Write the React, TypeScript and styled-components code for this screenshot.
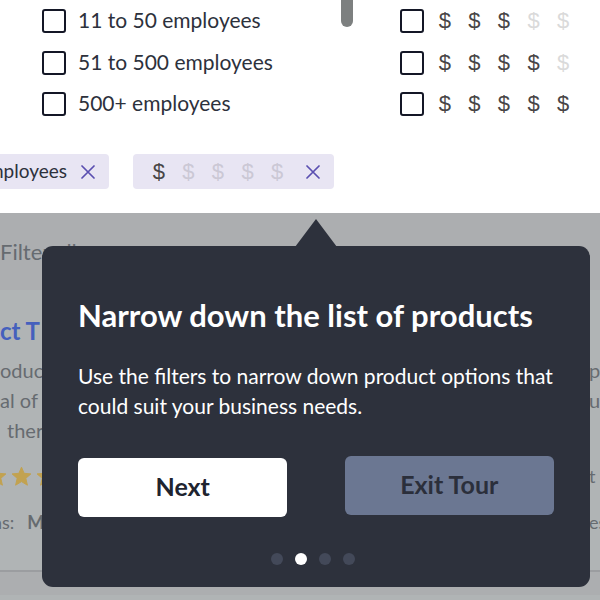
import React from "react";
import styled, { createGlobalStyle } from "styled-components";

const GlobalStyle = createGlobalStyle`
  *, *::before, *::after { box-sizing: border-box; }
  body {
    margin: 0;
    background: #acaeb0;
    font-family: Lato, "Noto Sans", sans-serif;
    font-size: 21px;
    color: #2d313c;
  }
  h2, p { margin: 0; }
  button { font: inherit; cursor: pointer; }
`;

const Page = styled.div`
  min-height: 100vh;
  display: flex;
  flex-direction: column;
  overflow: hidden;
`;

const FilterPanel = styled.section`
  background: #fff;
  padding-bottom: 24px;
`;

const FilterColumns = styled.div`
  display: grid;
  grid-template-columns: 1fr 12px 200px;
  column-gap: 47px;
  padding-left: 42px;
`;

const OptionList = styled.div`
  display: flex;
  flex-direction: column;
  justify-content: space-between;
  height: 116px;
  padding-top: 9px;
`;

const Option = styled.label`
  display: flex;
  align-items: center;
  gap: 12px;
  height: 24px;
  white-space: nowrap;
  cursor: pointer;
`;

const OptionText = styled.span`
  line-height: 22px;
  padding-bottom: 2px;
`;

const Checkbox = styled.input`
  appearance: none;
  flex: none;
  width: 24px;
  height: 24px;
  margin: 0;
  border: 2px solid #141726;
  border-radius: 3px;
  background: #fff;
  &:checked { background: #5a4fb0; }
`;

const ScrollThumb = styled.div`
  height: 27px;
  background: #7d8080;
  border-radius: 0 0 6px 6px;
`;

const PriceScale = styled.span`
  display: flex;
  width: 148px;
  font-family: "Liberation Sans", sans-serif;
  font-size: 22px;
  line-height: 24px;
`;

const OptionPrice = styled(PriceScale)`
  margin-left: -6px;
`;

const Dollar = styled.span<{ $on: boolean; $tone: string }>`
  flex: 1;
  text-align: center;
  color: ${(p) => (p.$on ? "#484546" : p.$tone)};
`;

const Chips = styled.div`
  display: flex;
  gap: 24px;
  margin-top: 38px;
`;

const Chip = styled.div<{ $clipped?: boolean }>`
  display: flex;
  align-items: center;
  justify-content: flex-end;
  gap: 14px;
  height: 35px;
  width: ${(p) => (p.$clipped ? "109px" : "auto")};
  padding: 0 14px 0 11px;
  border-radius: ${(p) => (p.$clipped ? "0 4px 4px 0" : "4px")};
  background: #e8e5f3;
  font-size: 19px;
  line-height: 24px;
  white-space: nowrap;
  overflow: hidden;
`;

const RemoveButton = styled.button`
  display: flex;
  flex: none;
  padding: 0;
  border: 0;
  background: none;
  color: #5a4fb0;
`;

const Results = styled.main`
  position: relative;
  flex: 1;
  color: #666b70;
`;

const ResultsHeading = styled.p`
  padding-top: 26px;
  height: 77px;
  line-height: 26px;
  font-size: 22px;
  white-space: nowrap;
`;

const Card = styled.article`
  height: 282px;
  padding-top: 25px;
  background: #b0b4b5;
  border-bottom: 2px solid #9b9da0;
  font-size: 20px;
`;

const NextCard = styled.article`
  height: 5px;
  margin-top: 23px;
  background: #b0b4b5;
`;

const CardRow = styled.div<{ $height?: number }>`
  display: grid;
  grid-template-columns: 1fr 11px;
  align-items: center;
  height: ${(p) => p.$height ?? 30}px;
  white-space: nowrap;
  overflow: hidden;
`;

const ProductLink = styled.a`
  display: block;
  height: 40px;
  line-height: 32px;
  color: #4560bd;
  font-size: 24px;
  font-weight: 700;
  text-decoration: none;
`;

const Indented = styled.span`
  padding-left: 7px;
`;

const Stars = styled.span`
  display: flex;
  gap: 4px;
  margin-left: -14px;
  color: #c2a250;
`;

const Meta = styled.span`
  display: flex;
  gap: 13px;
  margin-left: -8px;
  font-size: 18px;
`;

const MetaEnd = styled.span`
  font-size: 18px;
`;

const Popover = styled.div`
  position: absolute;
  top: 33px;
  left: 42px;
  right: 10px;
  padding: 51px 36px 22px;
  border-radius: 11px;
  background: #2d313c;
  color: #fff;
`;

const Arrow = styled.svg`
  position: absolute;
  top: -27px;
  left: 50%;
  width: 42px;
  height: 28px;
  margin-left: -21px;
  fill: #2d313c;
`;

const Title = styled.h2`
  font-size: 31px;
  line-height: 36px;
  font-weight: 700;
`;

const Body = styled.p`
  margin-top: 28px;
  font-size: 21px;
  line-height: 30px;
  max-width: 480px;
`;

const Actions = styled.div`
  display: flex;
  justify-content: space-between;
  align-items: flex-start;
  margin-top: 35px;
`;

const ActionButton = styled.button<{ $primary?: boolean }>`
  width: 44%;
  height: 59px;
  margin-top: ${(p) => (p.$primary ? "2px" : "0")};
  padding: 0 0 3px;
  border: 0;
  border-radius: 6px;
  background: ${(p) => (p.$primary ? "#fff" : "#6b7792")};
  color: ${(p) => (p.$primary ? "#20242f" : "#2b2f3b")};
  font-size: 25px;
  font-weight: 700;
`;

const Dots = styled.div`
  display: flex;
  justify-content: center;
  gap: 12px;
  margin-top: 36px;
  padding-right: 6px;
`;

const Dot = styled.button<{ $active: boolean }>`
  width: 12px;
  height: 12px;
  padding: 0;
  border: 0;
  border-radius: 50%;
  background: ${(p) => (p.$active ? "#fff" : "#434959")};
`;

const LEVELS = [1, 2, 3, 4, 5];

function Dollars({ level, tone }: { level: number; tone: string }) {
  return (
    <>
      {LEVELS.map((n) => (
        <Dollar key={n} $on={n <= level} $tone={tone}>$</Dollar>
      ))}
    </>
  );
}

function Remove({ label }: { label: string }) {
  return (
    <RemoveButton type="button" aria-label={label}>
      <svg width="14" height="14" viewBox="0 0 14 14" fill="none" stroke="currentColor" strokeWidth="1.7" strokeLinecap="round">
        <path d="M1 1l12 12M13 1L1 13" />
      </svg>
    </RemoveButton>
  );
}

function Star() {
  return (
    <svg width="21" height="21" viewBox="0 0 21 21" fill="currentColor" stroke="currentColor" strokeLinejoin="round">
      <path d="M10.5 1.2l2.6 6.1 6.8.6-5.1 4.400 1.600 6.900-5.900-3.600-5.900 3.600 1.600-6.900L1.100 7.900l6.800-.6z" />
    </svg>
  );
}

export default function App() {
  return (
    <Page>
      <GlobalStyle />
      <FilterPanel>
        <FilterColumns>
          <OptionList>
            {["11 to 50 employees", "51 to 500 employees", "500+ employees"].map((text) => (
              <Option key={text}>
                <Checkbox type="checkbox" />
                <OptionText>{text}</OptionText>
              </Option>
            ))}
          </OptionList>
          <ScrollThumb />
          <OptionList>
            {[3, 4, 5].map((level) => (
              <Option key={level}>
                <Checkbox type="checkbox" aria-label={`Price level ${level}`} />
                <OptionPrice><Dollars level={level} tone="#dadada" /></OptionPrice>
              </Option>
            ))}
          </OptionList>
        </FilterColumns>
        <Chips>
          <Chip $clipped>
            <OptionText>employees</OptionText>
            <Remove label="Remove size filter" />
          </Chip>
          <Chip>
            <PriceScale><Dollars level={1} tone="#cbc8d5" /></PriceScale>
            <Remove label="Remove price filter" />
          </Chip>
        </Chips>
      </FilterPanel>

      <Results>
        <ResultsHeading>Filter all</ResultsHeading>
        <Card>
          <ProductLink href="#product">ct T</ProductLink>
          <CardRow><span>oduct</span><span>p</span></CardRow>
          <CardRow><span>al of</span><span>u</span></CardRow>
          <CardRow><Indented>ther</Indented><span /></CardRow>
          <CardRow $height={62}>
            <Stars><Star /><Star /><Star /></Stars>
            <MetaEnd>t l</MetaEnd>
          </CardRow>
          <CardRow>
            <Meta><span>ns:</span><b>M</b></Meta>
            <MetaEnd>es</MetaEnd>
          </CardRow>
        </Card>
        <NextCard />

        <Popover role="dialog" aria-labelledby="tour-title">
          <Arrow viewBox="0 0 42 28" aria-hidden="true"><path d="M21 0L42 28H0z" /></Arrow>
          <Title id="tour-title">Narrow down the list of products</Title>
          <Body>Use the filters to narrow down product options that could suit your business needs.</Body>
          <Actions>
            <ActionButton type="button" $primary>Next</ActionButton>
            <ActionButton type="button">Exit Tour</ActionButton>
          </Actions>
          <Dots>
            {[1, 2, 3, 4].map((step) => (
              <Dot key={step} type="button" $active={step === 2} aria-label={`Step ${step}`} />
            ))}
          </Dots>
        </Popover>
      </Results>
    </Page>
  );
}
